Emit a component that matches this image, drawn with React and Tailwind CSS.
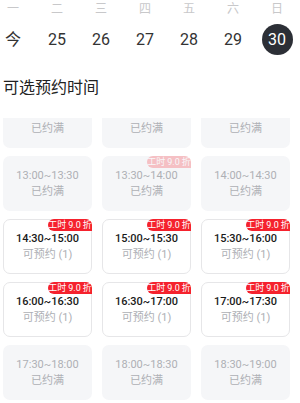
const weekdays = ["一", "二", "三", "四", "五", "六", "日"];
const days = ["今", "25", "26", "27", "28", "29", "30"];

const slots = [
  { time: "11:30~12:00", full: true },
  { time: "12:00~12:30", full: true },
  { time: "12:30~13:00", full: true },
  { time: "13:00~13:30", full: true },
  { time: "13:30~14:00", full: true, badge: true },
  { time: "14:00~14:30", full: true },
  { time: "14:30~15:00", badge: true },
  { time: "15:00~15:30", badge: true },
  { time: "15:30~16:00", badge: true },
  { time: "16:00~16:30", badge: true },
  { time: "16:30~17:00", badge: true },
  { time: "17:00~17:30", badge: true },
  { time: "17:30~18:00", full: true },
  { time: "18:00~18:30", full: true },
  { time: "18:30~19:00", full: true },
];

function Slot({ time, full, badge }) {
  return (
    <div
      className={`relative flex h-[55px] flex-col items-center justify-center rounded-[7px] ${
        full ? "bg-[#f5f6f8]" : "border border-[#e6e6e8] bg-white"
      }`}
    >
      {badge ? (
        <div
          className={`absolute flex h-[12px] w-[44px] items-center justify-center rounded-l-[6px] rounded-tr-[6px] bg-[#f5222d] text-[9px] leading-none text-white ${
            full ? "right-0 top-0 opacity-25" : "-right-px -top-px"
          }`}
        >
          工时<span className="mx-[2px]">9.0</span>折
        </div>
      ) : null}
      <div className={`text-[11px] leading-[16px] ${full ? "text-[#aeb0b5]" : "font-medium text-[#1a1a1a]"}`}>{time}</div>
      <div className="text-[11px] leading-[16px] text-[#aeb0b5]">{full ? "已约满" : "可预约 (1)"}</div>
    </div>
  );
}

export default function App() {
  return (
    <div className="h-[403px] w-[300px] overflow-hidden bg-white font-['Roboto','Noto_Sans_CJK_SC',sans-serif]">
      {/* week header */}
      <div className="-ml-[9px] grid h-[18px] w-[308px] grid-cols-7 items-center text-center text-[12px] text-[#c8c8ca]">
        {weekdays.map((w) => (
          <div key={w}>{w}</div>
        ))}
      </div>
      <div className="-ml-[9px] mt-[6px] grid h-[31px] w-[308px] grid-cols-7 items-center text-[16px] text-[#333]">
        {days.map((d, i) => (
          <div key={d} className="flex justify-center">
            {i === 6 ? (
              <span className="flex h-[31px] w-[31px] items-center justify-center rounded-full bg-[#2c2f36] text-white">
                {d}
              </span>
            ) : (
              <span>{d}</span>
            )}
          </div>
        ))}
      </div>

      <h2 className="mt-[22px] pl-[3px] text-[16px] font-normal leading-[22px] text-[#222]">可选预约时间</h2>

      {/* scrolled slot list */}
      <div className="mt-[19px] h-[285px] overflow-hidden">
        <div className="-mt-[25px] grid grid-cols-[89px_89px_89px] gap-x-[10px] gap-y-[8px] pl-[3px]">
          {slots.map((s) => (
            <Slot key={s.time} {...s} />
          ))}
        </div>
      </div>
    </div>
  );
}
